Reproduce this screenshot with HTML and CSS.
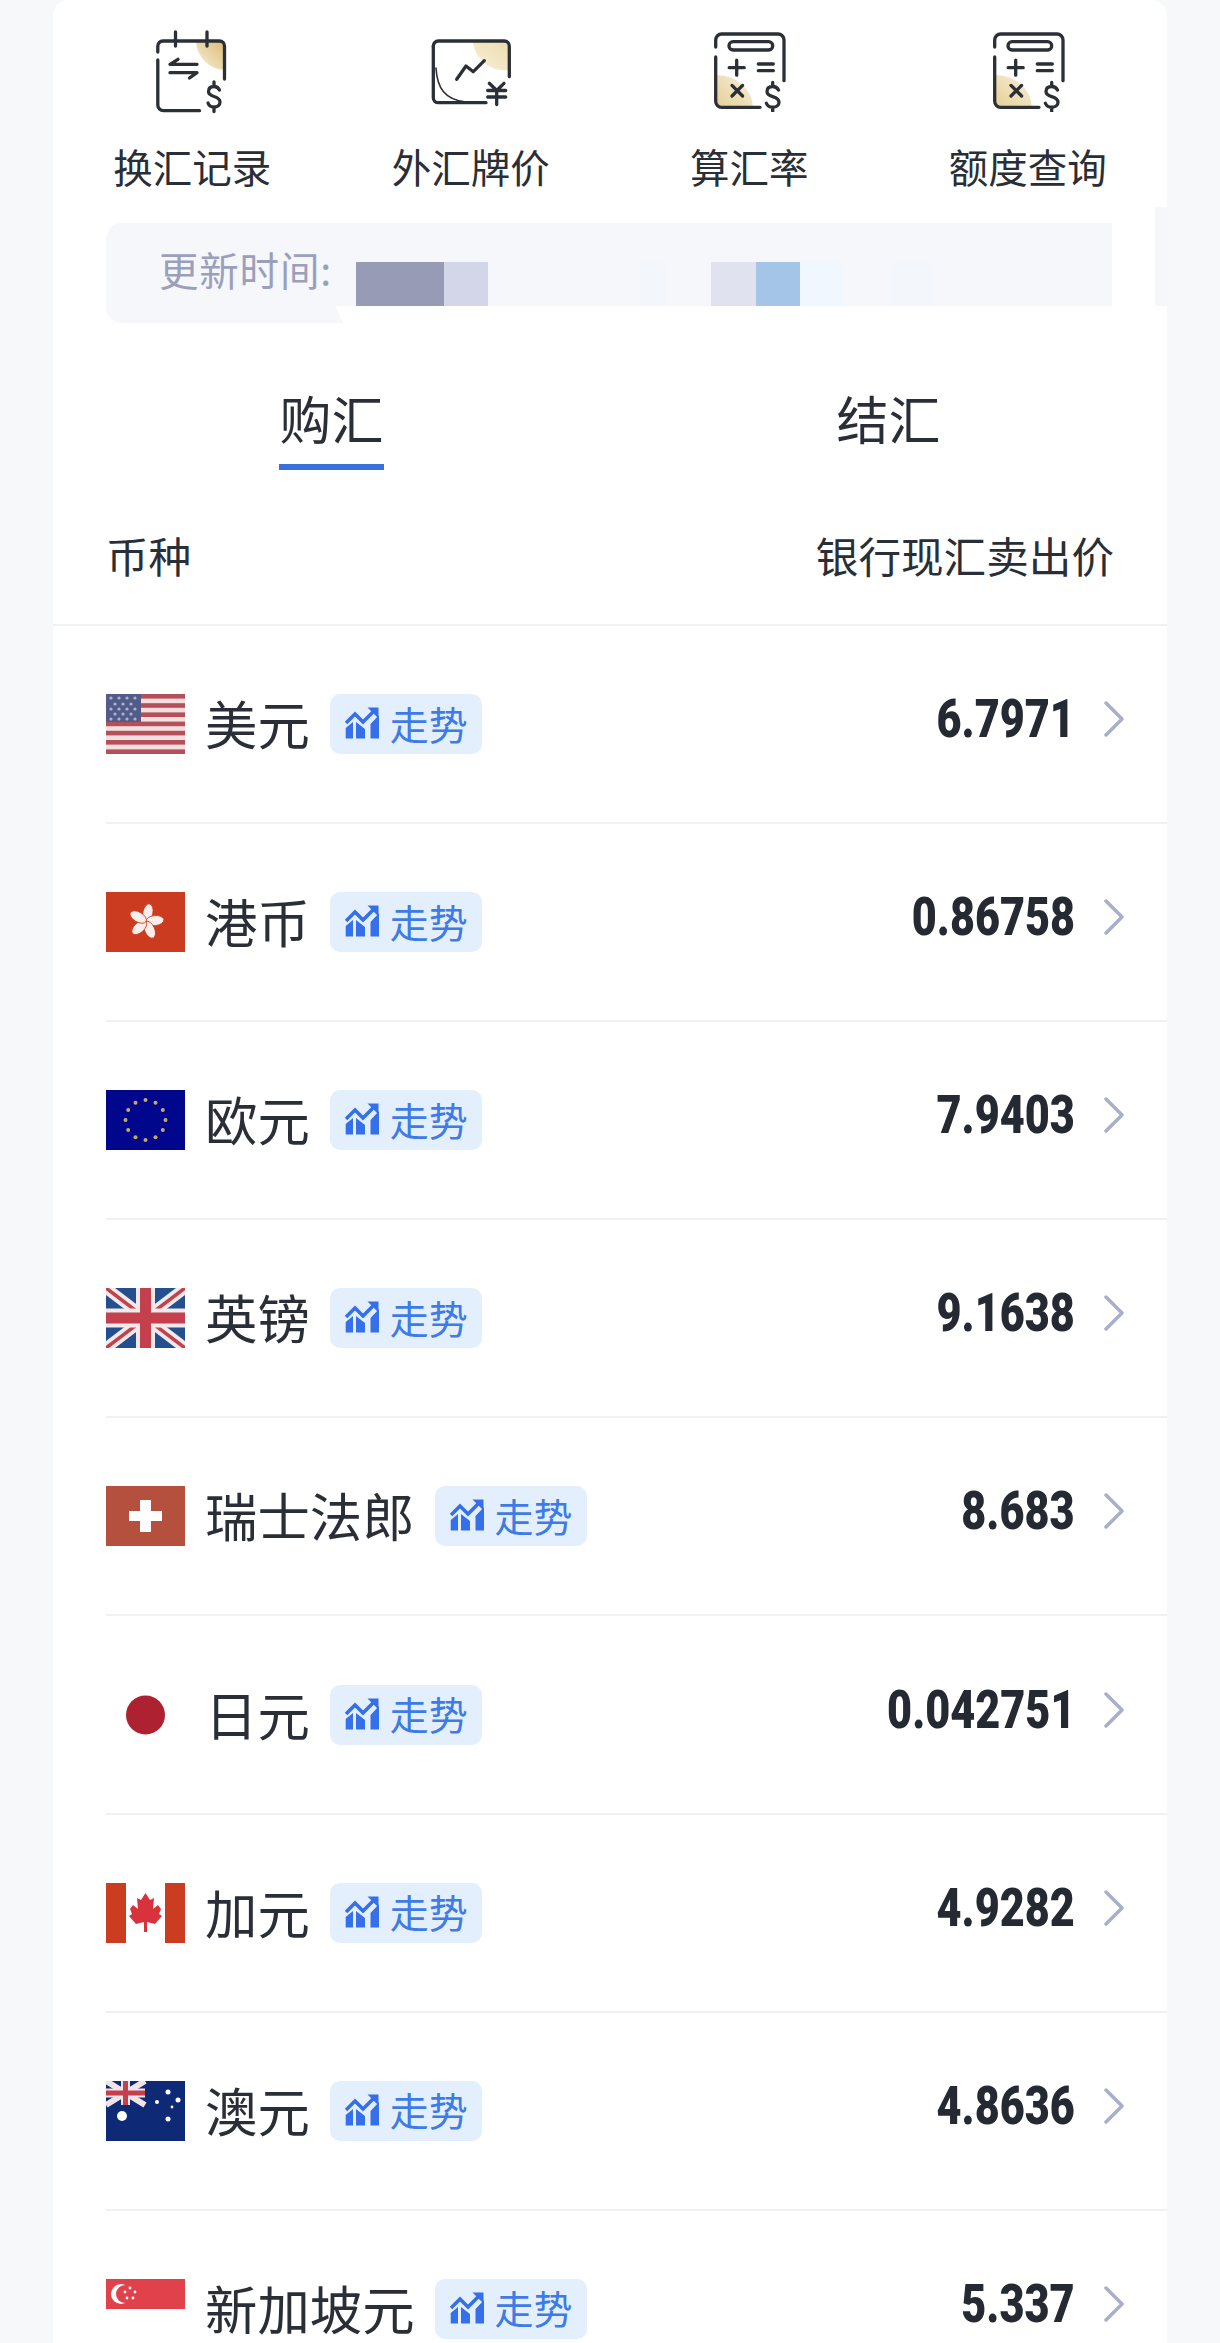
FILE: index.html
```html
<!DOCTYPE html>
<html lang="zh-CN">
<head>
<meta charset="utf-8">
<title>外汇</title>
<link rel="stylesheet" href="styles.css">
</head>
<body>
<svg class="sprite" aria-hidden="true">
  <defs>
    <linearGradient id="goldA" x1="1" y1="0" x2="0" y2="1"><stop offset="0" stop-color="#dcbc74"/><stop offset="1" stop-color="#f8f1de"/></linearGradient>
    <linearGradient id="goldB" x1="1" y1="0" x2="0" y2="1"><stop offset="0" stop-color="#ecdcae"/><stop offset="1" stop-color="#f8f0da"/></linearGradient>
    <linearGradient id="goldC" x1="0" y1="1" x2="1" y2="0"><stop offset="0" stop-color="#e6cf96"/><stop offset="1" stop-color="#f8f1dd"/></linearGradient>
    <symbol id="calc" viewBox="0 0 80 80">
      <path fill="url(#goldC)" d="M8 43A36 32 0 0 1 43.7 75H13a5 5 0 0 1-5-5Z"/>
      <g class="ink">
        <path d="M6.7 15V8a6 6 0 0 1 6-6H69a6 6 0 0 1 6 6V48.7"/>
        <path d="M6.7 25V69.3a6 6 0 0 0 6 6H51"/>
        <rect x="20" y="9.7" width="43.7" height="8.3" rx="4.1"/>
        <path d="M20.2 35.7H35.2M27.7 28.2V43.2"/>
        <path d="M49.3 32H64.3M49.3 38.7H64.3"/>
        <path d="M23 53.4L33.6 64M33.6 53.4L23 64"/>
        <path d="M69.5 58C68 55 66 54.5 63.7 54.5C60 54.5 58 56.5 58 59.5C58 62.5 60.5 63.6 63.7 64.6C67 65.6 70 66.8 70 70.2C70 73.2 67.5 75.2 63.7 75.2C61 75.2 58.5 74.2 57.4 71.2M63.7 50.5V54.5M63.7 75.2V79.5"/>
      </g>
    </symbol>
    <symbol id="trend" viewBox="0 0 34 34">
      <path d="M0.7 31.5V21L8 15V31.5ZM11 31.5V15L20 22V31.5ZM25.5 31.5V17L34 8V31.5Z"/>
      <path class="trend-line" d="M1 16L10 7L18 15L29 4"/>
      <path d="M22.5 0.5H33.5V11.5Z"/>
    </symbol>
  </defs>
</svg>

<main class="card">
  <nav class="shortcuts">
    <a class="shortcut">
      <svg class="shortcut-icon" viewBox="0 0 80 80">
        <path fill="url(#goldA)" d="M44 9H67.5a5 5 0 0 1 5 5V38A30 30 0 0 1 44 9Z"/>
        <g class="ink">
          <path d="M5.8 20V14a5 5 0 0 1 5-5H67.5a5 5 0 0 1 5 5V47"/>
          <path d="M5.8 28V73a5.7 5.7 0 0 0 5.7 5.7H47.5"/>
          <path d="M23.5 0V14M55 0V14"/>
          <path d="M26 27.3L18 32.3H45M18 40.7H45L37.5 46"/>
          <path d="M67.5 58C66 55 64.5 54.5 62 54.5C58.5 54.5 56.5 56.5 56.5 59.5C56.5 62.5 59 63.5 62 64.5C65 65.5 68 66.5 68 70C68 73 65.5 75 62 75C59.5 75 57 74 56 71M62 50V54.5M62 75V79.5"/>
        </g>
      </svg>
      <span class="shortcut-label">换汇记录</span>
    </a>
    <a class="shortcut">
      <svg class="shortcut-icon" viewBox="0 0 80 80">
        <path fill="url(#goldB)" d="M42 10H73a5 5 0 0 1 5 5V38C60 40 44 28 42 10Z"/>
        <g class="ink">
          <path d="M2.3 14a5 5 0 0 1 5-5H73.3a5 5 0 0 1 5 5V44.7"/>
          <path d="M2.3 14V65.7a5 5 0 0 0 5 5H55"/>
          <path class="ink-thin" d="M5 36C6 56 14 68 35 70"/>
          <path d="M25.7 47.3L35 34L42.3 39.7L53.3 28.7"/>
          <path d="M58.3 51.3L65.7 58.5L73 51.3M56.7 58.5H74.7M56.7 65H74.7M65.7 58.5V72.5"/>
        </g>
      </svg>
      <span class="shortcut-label">外汇牌价</span>
    </a>
    <a class="shortcut">
      <svg class="shortcut-icon"><use href="#calc"/></svg>
      <span class="shortcut-label">算汇率</span>
    </a>
    <a class="shortcut">
      <svg class="shortcut-icon"><use href="#calc"/></svg>
      <span class="shortcut-label">额度查询</span>
    </a>
  </nav>

  <div class="update-bar">
    <span class="update-text">更新时间:</span>
    <span class="blur blur-a"></span>
    <span class="blur blur-b"></span>
    <span class="blur blur-c"></span>
    <span class="blur blur-d"></span>
    <span class="blur blur-e"></span>
    <span class="blur blur-f"></span>
    <span class="blur blur-g"></span>
    <span class="update-mask"></span>
  </div>
  <span class="edge-patch"></span>

  <div class="tabs">
    <div class="tab"><span class="tab-text tab-active">购汇</span></div>
    <div class="tab"><span class="tab-text">结汇</span></div>
  </div>

  <div class="table-head">
    <span>币种</span>
    <span>银行现汇卖出价</span>
  </div>

  <ul class="rates">
    <li class="rate">
      <svg class="flag" viewBox="0 0 79 60">
        <rect width="79" height="60" fill="#f4dfe0"/>
        <g fill="#b4505a"><rect width="79" height="4.6"/><rect y="9.2" width="79" height="4.6"/><rect y="18.4" width="79" height="4.6"/><rect y="27.6" width="79" height="4.6"/><rect y="36.8" width="79" height="4.6"/><rect y="46" width="79" height="4.6"/><rect y="55.4" width="79" height="4.6"/></g>
        <rect width="35" height="28" fill="#525c88"/>
        <g fill="#aeb3cf"><circle cx="5" cy="4" r="1.6"/><circle cx="13" cy="4" r="1.6"/><circle cx="21" cy="4" r="1.6"/><circle cx="29" cy="4" r="1.6"/><circle cx="9" cy="10" r="1.6"/><circle cx="17" cy="10" r="1.6"/><circle cx="25" cy="10" r="1.6"/><circle cx="5" cy="15" r="1.6"/><circle cx="13" cy="15" r="1.6"/><circle cx="21" cy="15" r="1.6"/><circle cx="29" cy="15" r="1.6"/><circle cx="9" cy="20" r="1.6"/><circle cx="17" cy="20" r="1.6"/><circle cx="25" cy="20" r="1.6"/><circle cx="5" cy="25" r="1.6"/><circle cx="13" cy="25" r="1.6"/><circle cx="21" cy="25" r="1.6"/><circle cx="29" cy="25" r="1.6"/></g>
      </svg>
      <span class="rate-name">美元</span>
      <span class="trend"><svg class="trend-icon"><use href="#trend"/></svg>走势</span>
      <span class="rate-value"><span class="rate-num rate-num-one">6.7971</span><svg class="chevron" viewBox="0 0 20 36"><path d="M2 2L18 18L2 34"/></svg></span>
    </li>
    <li class="rate">
      <svg class="flag" viewBox="0 0 79 60">
        <rect width="79" height="60" fill="#cb3b20"/>
        <g fill="#fbeeea" stroke="#cb3b20" stroke-width="0.8"><ellipse cx="40" cy="20.5" rx="5" ry="9" transform="rotate(12 40 29.5)"/><ellipse cx="40" cy="20.5" rx="5" ry="9" transform="rotate(84 40 29.5)"/><ellipse cx="40" cy="20.5" rx="5" ry="9" transform="rotate(156 40 29.5)"/><ellipse cx="40" cy="20.5" rx="5" ry="9" transform="rotate(228 40 29.5)"/><ellipse cx="40" cy="20.5" rx="5" ry="9" transform="rotate(300 40 29.5)"/></g>
      </svg>
      <span class="rate-name">港币</span>
      <span class="trend"><svg class="trend-icon"><use href="#trend"/></svg>走势</span>
      <span class="rate-value"><span class="rate-num">0.86758</span><svg class="chevron" viewBox="0 0 20 36"><path d="M2 2L18 18L2 34"/></svg></span>
    </li>
    <li class="rate">
      <svg class="flag" viewBox="0 0 79 60">
        <rect width="79" height="60" fill="#00078c"/>
        <g fill="#c9a861"><circle cx="39.5" cy="10" r="2"/><circle cx="49.5" cy="12.7" r="2"/><circle cx="56.8" cy="20" r="2"/><circle cx="59.5" cy="30" r="2"/><circle cx="56.8" cy="40" r="2"/><circle cx="49.5" cy="47.3" r="2"/><circle cx="39.5" cy="50" r="2"/><circle cx="29.5" cy="47.3" r="2"/><circle cx="22.2" cy="40" r="2"/><circle cx="19.5" cy="30" r="2"/><circle cx="22.2" cy="20" r="2"/><circle cx="29.5" cy="12.7" r="2"/></g>
      </svg>
      <span class="rate-name">欧元</span>
      <span class="trend"><svg class="trend-icon"><use href="#trend"/></svg>走势</span>
      <span class="rate-value"><span class="rate-num">7.9403</span><svg class="chevron" viewBox="0 0 20 36"><path d="M2 2L18 18L2 34"/></svg></span>
    </li>
    <li class="rate">
      <svg class="flag" viewBox="0 0 79 60">
        <rect width="79" height="60" fill="#234f8e"/>
        <path d="M0 0L79 60M79 0L0 60" stroke="#f2e9ea" stroke-width="11"/>
        <path d="M0 0L79 60M79 0L0 60" stroke="#c4404c" stroke-width="3.5"/>
        <path d="M39.5 0V60M0 30H79" stroke="#f2e9ea" stroke-width="19"/>
        <path d="M39.5 0V60M0 30H79" stroke="#c4404c" stroke-width="11"/>
      </svg>
      <span class="rate-name">英镑</span>
      <span class="trend"><svg class="trend-icon"><use href="#trend"/></svg>走势</span>
      <span class="rate-value"><span class="rate-num">9.1638</span><svg class="chevron" viewBox="0 0 20 36"><path d="M2 2L18 18L2 34"/></svg></span>
    </li>
    <li class="rate">
      <svg class="flag" viewBox="0 0 79 60">
        <rect width="79" height="60" fill="#b5503f"/>
        <path d="M34 14H45V25H56V35H45V46H34V35H23V25H34Z" fill="#fff"/>
      </svg>
      <span class="rate-name">瑞士法郎</span>
      <span class="trend"><svg class="trend-icon"><use href="#trend"/></svg>走势</span>
      <span class="rate-value"><span class="rate-num">8.683</span><svg class="chevron" viewBox="0 0 20 36"><path d="M2 2L18 18L2 34"/></svg></span>
    </li>
    <li class="rate">
      <svg class="flag" viewBox="0 0 79 60">
        <circle cx="39.5" cy="30" r="19.5" fill="#ad2130"/>
      </svg>
      <span class="rate-name">日元</span>
      <span class="trend"><svg class="trend-icon"><use href="#trend"/></svg>走势</span>
      <span class="rate-value"><span class="rate-num rate-num-one">0.042751</span><svg class="chevron" viewBox="0 0 20 36"><path d="M2 2L18 18L2 34"/></svg></span>
    </li>
    <li class="rate">
      <svg class="flag" viewBox="0 0 79 60">
        <rect width="79" height="60" fill="#fff"/>
        <rect width="20" height="60" fill="#cb3d20"/>
        <rect x="59" width="20" height="60" fill="#cb3d20"/>
        <path d="M39.5 10L44 17L48 15L47 26L52 22L55 26L53 31L56 33L49 41L41 39V49H38V39L30 41L23 33L26 31L24 26L27 22L32 26L31 15L35 17Z" fill="#d8333c"/>
      </svg>
      <span class="rate-name">加元</span>
      <span class="trend"><svg class="trend-icon"><use href="#trend"/></svg>走势</span>
      <span class="rate-value"><span class="rate-num">4.9282</span><svg class="chevron" viewBox="0 0 20 36"><path d="M2 2L18 18L2 34"/></svg></span>
    </li>
    <li class="rate">
      <svg class="flag" viewBox="0 0 79 60">
        <rect width="79" height="60" fill="#0e2a76"/>
        <path d="M0 0L39 24M39 0L0 24" stroke="#f0e4e8" stroke-width="6"/>
        <path d="M19.5 0V24M0 12H39" stroke="#f0e4e8" stroke-width="9"/>
        <path d="M19.5 0V24M0 12H39" stroke="#c4404c" stroke-width="5"/>
        <g fill="#fff"><circle cx="16" cy="35" r="5"/><circle cx="62" cy="11" r="2.5"/><circle cx="51" cy="21" r="2"/><circle cx="72" cy="19" r="2.5"/><circle cx="66" cy="26" r="1.4"/><circle cx="62" cy="38" r="2.5"/></g>
      </svg>
      <span class="rate-name">澳元</span>
      <span class="trend"><svg class="trend-icon"><use href="#trend"/></svg>走势</span>
      <span class="rate-value"><span class="rate-num">4.8636</span><svg class="chevron" viewBox="0 0 20 36"><path d="M2 2L18 18L2 34"/></svg></span>
    </li>
    <li class="rate">
      <svg class="flag" viewBox="0 0 79 60">
        <rect width="79" height="30" fill="#e0414b"/>
        <circle cx="15" cy="15" r="10" fill="#fff"/>
        <circle cx="19" cy="15" r="9" fill="#e0414b"/>
        <g fill="#fff"><circle cx="24" cy="9" r="1.4"/><circle cx="29" cy="13" r="1.4"/><circle cx="27" cy="19" r="1.4"/><circle cx="21" cy="19" r="1.4"/><circle cx="19" cy="13" r="1.4"/></g>
      </svg>
      <span class="rate-name">新加坡元</span>
      <span class="trend"><svg class="trend-icon"><use href="#trend"/></svg>走势</span>
      <span class="rate-value"><span class="rate-num">5.337</span><svg class="chevron" viewBox="0 0 20 36"><path d="M2 2L18 18L2 34"/></svg></span>
    </li>
  </ul>
</main>
</body>
</html>
```

FILE: styles.css
```css
* { box-sizing: border-box; }

html, body {
  margin: 0;
  height: 2343px;
  overflow: hidden;
  background: #f6f8fa;
}

body {
  font-family: "Noto Sans CJK SC", "Noto Sans", sans-serif;
  color: #2a2e36;
}

.sprite {
  position: absolute;
  width: 0;
  height: 0;
}

.ink {
  fill: none;
  stroke: #2b2f36;
  stroke-width: 3.3;
  stroke-linecap: round;
  stroke-linejoin: round;
}

.ink-thin { stroke-width: 1.6; }

.card {
  position: relative;
  width: 1114px;
  margin-left: 53px;
  background: #fff;
  border-radius: 16px 16px 0 0;
}

.shortcuts {
  display: grid;
  grid-template-columns: repeat(4, 1fr);
  padding-top: 32px;
}

.shortcut {
  display: flex;
  flex-direction: column;
  align-items: center;
}

.shortcut-icon {
  display: block;
  width: 80px;
  height: 80px;
  overflow: visible;
}

.shortcut-label {
  margin-top: 26px;
  font-size: 39.5px;
  line-height: 56px;
}

.update-bar {
  position: relative;
  display: flex;
  align-items: flex-start;
  height: 100px;
  margin: 29px 55px 0 53px;
  padding-left: 53px;
  background: #f6f7fb;
  border-radius: 16px 0 0 16px;
}

.update-text {
  width: 197px;
  padding-top: 21px;
  font-size: 39.5px;
  line-height: 50px;
  letter-spacing: 0.8px;
  color: #9a9fbb;
}

.blur {
  flex: none;
  height: 44px;
  margin-top: 39px;
}

.blur-a { width: 88px; background: #979bb6; }
.blur-b { width: 44px; background: #d3d6e8; }
.blur-c { width: 26px; margin-left: 152px; background: #f3f7fb; }
.blur-d { width: 45px; margin-left: 45px; background: #e0e3ef; }
.blur-e { width: 44px; background: #a4c5e8; }
.blur-f { width: 44px; background: #f0f7fe; }
.blur-g { width: 43px; margin-left: 46px; background: #f3f7fb; }

.update-mask {
  position: absolute;
  left: 229px;
  right: 0;
  bottom: 0;
  height: 17px;
  background: #fff;
  clip-path: polygon(0 0, 100% 0, 100% 100%, 8px 100%);
}

.edge-patch {
  position: absolute;
  top: 207px;
  right: 0;
  width: 12px;
  height: 99px;
  background: #f6f7fb;
}

.tabs {
  display: grid;
  grid-template-columns: 1fr 1fr;
  margin-top: 60px;
  height: 87px;
}

.tab {
  display: flex;
  justify-content: center;
  align-items: flex-start;
}

.tab-text {
  display: block;
  width: 105px;
  height: 87px;
  font-size: 52px;
  line-height: 70px;
  text-align: center;
}

.tab-active { border-bottom: 6px solid #3871dc; }

.table-head {
  display: flex;
  justify-content: space-between;
  height: 156px;
  padding: 53px 53px 0;
  border-bottom: 2px solid #f0f1f3;
  font-size: 42.6px;
  line-height: 64px;
}

.rates {
  margin: 0 0 0 53px;
  padding: 0;
  list-style: none;
}

.rate {
  display: flex;
  align-items: center;
  height: 198.1px;
  padding-right: 43px;
  border-bottom: 2px solid #f0f1f3;
}

.flag {
  flex: none;
  width: 79px;
  height: 60px;
}

.rate-name {
  margin-left: 20px;
  padding-bottom: 4px;
  font-size: 52.4px;
  line-height: 60px;
}

.trend {
  display: flex;
  align-items: center;
  height: 60px;
  margin-left: 20px;
  padding: 0 14px 3px 15px;
  border-radius: 10px;
  background: #e4effd;
  color: #3f7be6;
  font-size: 39px;
  line-height: 54px;
}

.trend-icon {
  width: 34px;
  height: 34px;
  margin-top: 3px;
  margin-right: 11px;
  fill: #3570ea;
}

.trend-line {
  fill: none;
  stroke: #3570ea;
  stroke-width: 3.6;
}

.rate-value {
  display: flex;
  align-items: center;
  margin-left: auto;
  padding-bottom: 10px;
  font-family: "Roboto", "Liberation Sans", sans-serif;
  font-size: 54px;
  font-weight: 900;
  line-height: 60px;
  color: #242932;
}

.rate-num {
  display: block;
  transform: scaleX(0.8);
  transform-origin: right center;
}

.rate-num-one { margin-right: 4px; }

.chevron {
  width: 20px;
  height: 36px;
  margin-left: 29px;
  fill: none;
  stroke: #a8aecb;
  stroke-width: 3.5;
  stroke-linecap: round;
  stroke-linejoin: round;
}

.rate-num-one + .chevron { margin-left: 25px; }
```
